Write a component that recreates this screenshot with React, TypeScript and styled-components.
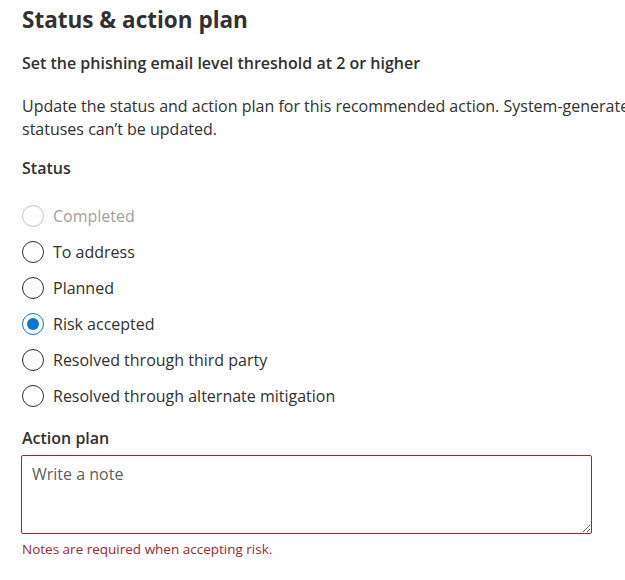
import React, { useState } from 'react';
import styled, { createGlobalStyle } from 'styled-components';

const GlobalStyle = createGlobalStyle`
	html, body {
		margin: 0;
		padding: 0;
		background: #ffffff;
		overflow: hidden;
	}
	body {
		font-family: "Open Sans", "Noto Sans", "Liberation Sans", sans-serif;
		color: #323130;
	}
`;

const Panel = styled.div`
	width: 680px;
	padding: 4px 0 0 22px;
	box-sizing: border-box;
`;

const Title = styled.h2`
	margin: 0;
	font-size: 22.5px;
	font-weight: 700;
	line-height: 32px;
	color: #323130;
`;

const Subtitle = styled.h3`
	margin: 16px 0 0 0;
	font-size: 16px;
	font-weight: 600;
	line-height: 22px;
	color: #323130;
`;

const Description = styled.p`
	margin: 21px 0 0 0;
	width: 640px;
	font-size: 16px;
	line-height: 23px;
	color: #323130;
`;

const Label = styled.div<{ $top: number }>`
	margin-top: ${({ $top }) => $top}px;
	font-size: 16px;
	font-weight: 600;
	line-height: 24px;
	color: #323130;
`;

const Options = styled.div`
	display: flex;
	flex-direction: column;
	gap: 12px;
	margin-top: 24px;
`;

const Option = styled.label<{ $disabled?: boolean }>`
	display: flex;
	align-items: center;
	gap: 9px;
	height: 24px;
	font-size: 16px;
	color: ${({ $disabled }) => ($disabled ? '#a19f9d' : '#323130')};
	cursor: ${({ $disabled }) => ($disabled ? 'default' : 'pointer')};
`;

const Circle = styled.span<{ $checked: boolean; $disabled?: boolean }>`
	position: relative;
	flex: none;
	width: 22px;
	height: 22px;
	box-sizing: border-box;
	border-radius: 50%;
	border: 1px solid
		${({ $checked, $disabled }) => ($disabled ? '#c8c6c4' : $checked ? '#0078d4' : '#323130')};
	&::after {
		content: '';
		display: ${({ $checked }) => ($checked ? 'block' : 'none')};
		position: absolute;
		left: 4px;
		top: 4px;
		width: 12px;
		height: 12px;
		border-radius: 50%;
		background: #0078d4;
	}
`;

const NoteBox = styled.textarea`
	display: block;
	margin: 5px 0 0 -1px;
	width: 571px;
	height: 79px;
	box-sizing: border-box;
	padding: 7px 10px;
	border: 1px solid #a4262c;
	border-radius: 2px;
	font-family: inherit;
	font-size: 16px;
	line-height: 22px;
	color: #323130;
	resize: vertical;
	outline: none;
	&::placeholder {
		color: #605e5c;
	}
`;

const ErrorText = styled.div`
	margin-top: 5px;
	font-size: 13.5px;
	line-height: 20px;
	color: #a4262c;
`;

const statuses = [
	{ key: 'completed', text: 'Completed', disabled: true },
	{ key: 'toAddress', text: 'To address' },
	{ key: 'planned', text: 'Planned' },
	{ key: 'riskAccepted', text: 'Risk accepted' },
	{ key: 'thirdParty', text: 'Resolved through third party' },
	{ key: 'alternate', text: 'Resolved through alternate mitigation' },
];

export default function App() {
	const [status, setStatus] = useState('riskAccepted');
	const [note, setNote] = useState('');
	return (
		<>
			<GlobalStyle />
			<Panel>
				<Title>Status &amp; action plan</Title>
				<Subtitle>Set the phishing email level threshold at 2 or higher</Subtitle>
				<Description>
					Update the status and action plan for this recommended action. System-generated statuses can’t be updated.
				</Description>
				<Label $top={15}>Status</Label>
				<Options>
					{statuses.map(s => (
						<Option
							key={s.key}
							$disabled={s.disabled}
							onClick={() => !s.disabled && setStatus(s.key)}
						>
							<Circle $checked={status === s.key} $disabled={s.disabled} />
							{s.text}
						</Option>
					))}
				</Options>
				<Label $top={18}>Action plan</Label>
				<NoteBox
					placeholder="Write a note"
					value={note}
					onChange={e => setNote(e.target.value)}
				/>
				<ErrorText>Notes are required when accepting risk.</ErrorText>
			</Panel>
		</>
	);
}
